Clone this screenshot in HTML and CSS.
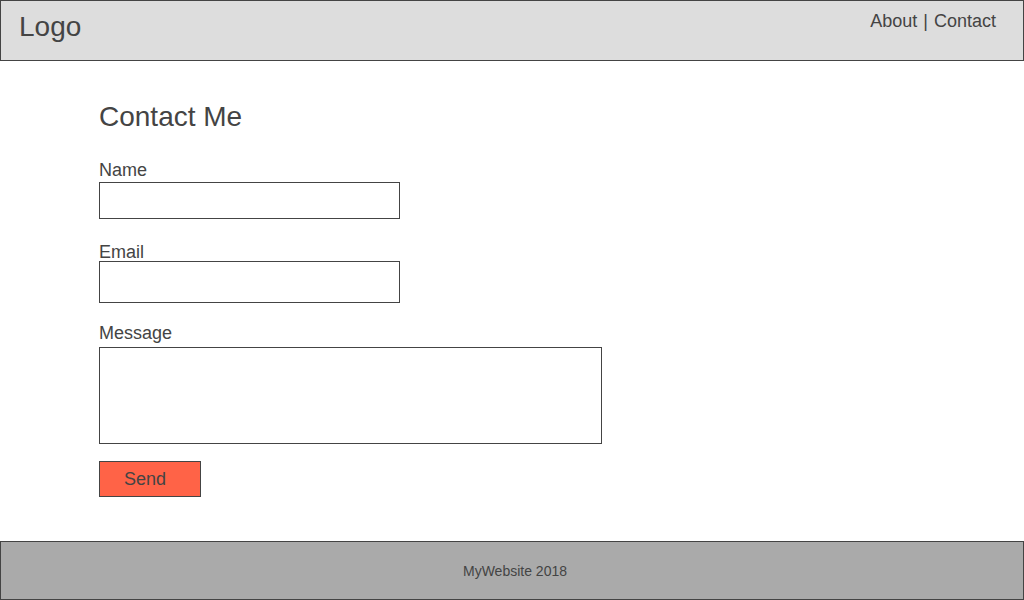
FILE: index.html
```html
<!DOCTYPE html>
<html lang="en">
<head>
<meta charset="utf-8">
<title>Contact Me</title>
<link rel="stylesheet" href="styles.css">
</head>
<body>
<div class="page">
  <header class="site-header">
    <div class="logo">Logo</div>
    <nav class="nav"><a href="#">About</a> <span class="sep">|</span> <a href="#">Contact</a></nav>
  </header>
  <main class="content">
    <h1 class="title">Contact Me</h1>
    <form class="contact-form">
      <label class="label label-name" for="name">Name</label>
      <input class="field field-name" id="name" type="text">
      <label class="label label-email" for="email">Email</label>
      <input class="field field-email" id="email" type="email">
      <label class="label label-message" for="message">Message</label>
      <textarea class="field field-message" id="message"></textarea>
      <button class="send" type="button">Send</button>
    </form>
  </main>
  <footer class="site-footer">MyWebsite 2018</footer>
</div>
</body>
</html>
```

FILE: styles.css
```css
* { box-sizing: border-box; }

html, body {
  margin: 0;
  padding: 0;
  background: #fff;
}

body {
  font-family: "Liberation Sans", Arial, sans-serif;
  color: #444;
}

.page {
  display: flex;
  flex-direction: column;
  min-height: 600px;
}

.site-header {
  height: 61px;
  background: #ddd;
  border: 1px solid #444;
  display: flex;
  justify-content: space-between;
  align-items: flex-start;
  padding: 10px 27px 0 18px;
}

.logo {
  font-size: 28px;
  line-height: 32px;
}

.nav {
  font-size: 18px;
  line-height: 21px;
}

.nav a {
  color: #444;
  text-decoration: none;
}

.sep {
  margin: 0 1px;
}

.content {
  padding: 0 0 0 99px;
}

.title {
  margin: 40px 0 0 0;
  font-size: 28px;
  line-height: 32px;
  font-weight: normal;
}

.contact-form {
  display: flex;
  flex-direction: column;
  align-items: flex-start;
}

.label {
  display: block;
  font-size: 18px;
  line-height: 20px;
}

.label-name { margin-top: 27px; }
.label-email { margin-top: 23px; }
.label-message { margin-top: 20px; }

.field {
  display: block;
  border: 1px solid #444;
  background: #fff;
  margin: 0;
  padding: 0;
  font-family: inherit;
  outline: none;
  border-radius: 0;
}

.field-name {
  width: 301px;
  height: 37px;
  margin-top: 2px;
}

.field-email {
  width: 301px;
  height: 42px;
  margin-top: -1px;
}

.field-message {
  width: 503px;
  height: 97px;
  margin-top: 4px;
  resize: none;
}

.send {
  margin-top: 17px;
  width: 102px;
  height: 36px;
  background: #ff6347;
  border: 1px solid #444;
  border-radius: 0;
  color: #444;
  font-family: inherit;
  font-size: 18px;
  text-align: left;
  padding: 0 0 0 24px;
}

.site-footer {
  margin-top: auto;
  height: 59px;
  background: #aaa;
  border: 1px solid #444;
  display: flex;
  align-items: center;
  justify-content: center;
  padding-left: 6px;
  padding-top: 1px;
  font-size: 14px;
}
```
